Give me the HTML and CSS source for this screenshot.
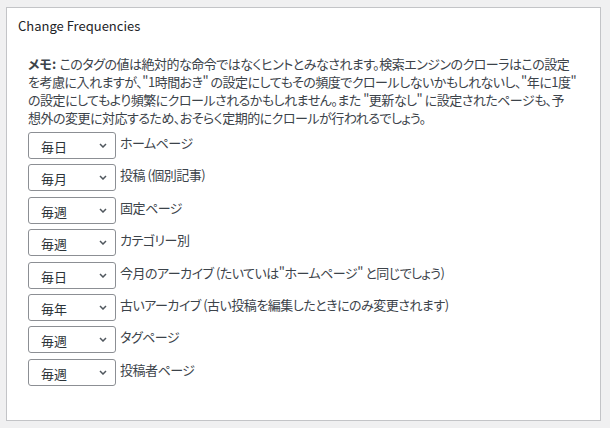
FILE: index.html
```html
<!DOCTYPE html>
<html lang="ja">
<head>
<meta charset="utf-8">
<title>Change Frequencies</title>
<link rel="stylesheet" href="styles.css">
</head>
<body>
<div class="postbox">
  <h2 class="hndle">Change Frequencies</h2>
  <div class="inside">
    <p class="note"><strong>メモ:</strong> このタグの値は絶対的な命令ではなくヒントとみなされます。検索エンジンのクローラはこの設定<br>を考慮に入れますが、"1時間おき" の設定にしてもその頻度でクロールしないかもしれないし、"年に1度"<br>の設定にしてもより頻繁にクロールされるかもしれません。また "更新なし" に設定されたページも、予<br>想外の変更に対応するため、おそらく定期的にクロールが行われるでしょう。</p>
    <ul class="freq-list">
      <li class="row">
        <span class="select-wrap"><select class="freq"><option>毎日</option></select><svg class="chev" viewBox="0 0 8 5" width="8" height="5"><path d="M1 1l3 3 3-3" fill="none" stroke="#50575e" stroke-width="1.5"/></svg></span>
        <label class="lbl">ホームページ</label>
      </li>
      <li class="row">
        <span class="select-wrap"><select class="freq"><option>毎月</option></select><svg class="chev" viewBox="0 0 8 5" width="8" height="5"><path d="M1 1l3 3 3-3" fill="none" stroke="#50575e" stroke-width="1.5"/></svg></span>
        <label class="lbl">投稿 (個別記事)</label>
      </li>
      <li class="row">
        <span class="select-wrap"><select class="freq"><option>毎週</option></select><svg class="chev" viewBox="0 0 8 5" width="8" height="5"><path d="M1 1l3 3 3-3" fill="none" stroke="#50575e" stroke-width="1.5"/></svg></span>
        <label class="lbl">固定ページ</label>
      </li>
      <li class="row">
        <span class="select-wrap"><select class="freq"><option>毎週</option></select><svg class="chev" viewBox="0 0 8 5" width="8" height="5"><path d="M1 1l3 3 3-3" fill="none" stroke="#50575e" stroke-width="1.5"/></svg></span>
        <label class="lbl">カテゴリー別</label>
      </li>
      <li class="row">
        <span class="select-wrap"><select class="freq"><option>毎日</option></select><svg class="chev" viewBox="0 0 8 5" width="8" height="5"><path d="M1 1l3 3 3-3" fill="none" stroke="#50575e" stroke-width="1.5"/></svg></span>
        <label class="lbl">今月のアーカイブ (たいていは"ホームページ" と同じでしょう)</label>
      </li>
      <li class="row">
        <span class="select-wrap"><select class="freq"><option>毎年</option></select><svg class="chev" viewBox="0 0 8 5" width="8" height="5"><path d="M1 1l3 3 3-3" fill="none" stroke="#50575e" stroke-width="1.5"/></svg></span>
        <label class="lbl">古いアーカイブ (古い投稿を編集したときにのみ変更されます)</label>
      </li>
      <li class="row">
        <span class="select-wrap"><select class="freq"><option>毎週</option></select><svg class="chev" viewBox="0 0 8 5" width="8" height="5"><path d="M1 1l3 3 3-3" fill="none" stroke="#50575e" stroke-width="1.5"/></svg></span>
        <label class="lbl">タグページ</label>
      </li>
      <li class="row">
        <span class="select-wrap"><select class="freq"><option>毎週</option></select><svg class="chev" viewBox="0 0 8 5" width="8" height="5"><path d="M1 1l3 3 3-3" fill="none" stroke="#50575e" stroke-width="1.5"/></svg></span>
        <label class="lbl">投稿者ページ</label>
      </li>
    </ul>
  </div>
</div>
</body>
</html>
```
FILE: styles.css
```css
html, body {
  margin: 0;
  padding: 0;
}
body {
  background: #f0f0f1;
  padding: 7px 9px 7px 6px;
  font-family: "Noto Sans CJK JP", "Noto Sans", sans-serif;
  color: #3c434a;
  font-size: 13px;
}
.postbox {
  box-sizing: border-box;
  width: 595px;
  height: 414px;
  background: #fff;
  border: 1px solid #c3c4c7;
}
.hndle {
  margin: 0;
  padding: 8px 11px 0;
  font-size: 13px;
  font-weight: 400;
  line-height: 20px;
  color: #1d2327;
}
.inside {
  padding: 0 12px 0 21px;
}
.note {
  margin: 19px 0 0;
  line-height: 18px;
  white-space: nowrap;
  font-feature-settings: "palt";
  letter-spacing: -0.5px;
}
.note strong {
  font-weight: 700;
  letter-spacing: 0;
  margin-right: 1px;
}
.freq-list {
  list-style: none;
  margin: 5px 0 0;
  padding: 0;
  display: flex;
  flex-direction: column;
  gap: 5.4px;
}
.row {
  display: flex;
  align-items: flex-start;
  gap: 4px;
}
.select-wrap {
  position: relative;
  display: block;
  width: 88px;
  height: 27px;
}
.freq {
  appearance: none;
  -webkit-appearance: none;
  box-sizing: border-box;
  width: 88px;
  height: 27px;
  margin: 0;
  padding: 2px 20px 0 12px;
  border: 1px solid #8c8f94;
  border-radius: 3px;
  background: #fff;
  font-family: inherit;
  font-size: 13px;
  color: #2c3338;
}
.chev {
  position: absolute;
  right: 9px;
  top: 11px;
  pointer-events: none;
}
.lbl {
  padding-top: 2px;
  line-height: 18px;
  font-feature-settings: "palt";
  letter-spacing: -0.5px;
}
```
